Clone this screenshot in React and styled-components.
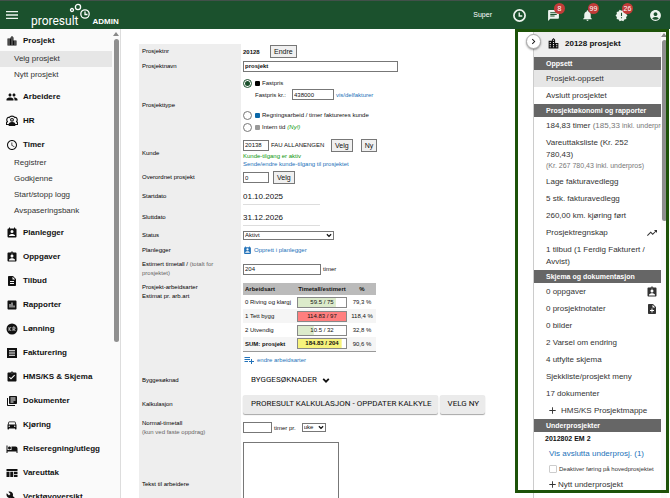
import React from "react"
import styled, { createGlobalStyle, css } from "styled-components"
import {
  MdAccountCircle,
  MdAdd,
  MdAssessment,
  MdAssignmentInd,
  MdAssignmentTurnedIn,
  MdBuild,
  MdChat,
  MdChevronRight,
  MdDescription,
  MdDirectionsCar,
  MdHotel,
  MdLibraryBooks,
  MdLocationCity,
  MdMenu,
  MdNewReleases,
  MdNotifications,
  MdNoteAdd,
  MdPeople,
  MdPlaylistAdd,
  MdAccessTime,
  MdTrendingUp,
} from "react-icons/md"

const PlannerIcon = () => (
  <svg viewBox="0 0 24 24" fill="currentColor" aria-hidden="true">
    <path d="M19 3h-1V1h-2v2H8V1H6v2H5a2 2 0 0 0-2 2v14a2 2 0 0 0 2 2h14a2 2 0 0 0 2-2V5a2 2 0 0 0-2-2zm-7 3a3 3 0 1 1 0 6 3 3 0 0 1 0-6zm6 12H6v-1c0-2 4-3.1 6-3.1s6 1.1 6 3.1v1z" />
  </svg>
)

const HrIcon = () => (
  <svg
    viewBox="1 1 26 23"
    fill="none"
    stroke="currentColor"
    strokeWidth="2.4"
    aria-hidden="true"
  >
    <path d="M9 20H2v-3c0-2 2-3 3-3-2-1-3-3-2-6s3-4 5-3c1-2 4-3 6-3s5 1 6 3c2-1 4 0 5 3s0 5-2 6c1 0 3 1 3 3v3h-7" />
    <circle cx="14" cy="10" r="3" />
    <path d="M8 22v-2c0-3 3-4 6-4s6 1 6 4v2z" fill="currentColor" />
  </svg>
)

const WageIcon = () => (
  <svg viewBox="0 0 24 24" aria-hidden="true">
    <circle cx="12" cy="12" r="11" fill="currentColor" />
    <g fill="none" stroke="#ddd" strokeWidth="1.6">
      <path d="M6 8v8M10.500 8L6.500 12l4 4" />
      <path d="M14 16V8h2a2.200 2.200 0 0 1 0 4.400h-2M16 12.400l2.500 3.600" />
    </g>
  </svg>
)

const InvoiceIcon = () => (
  <svg viewBox="0 0 24 24" aria-hidden="true">
    <path d="M2 2h20v20H2z" fill="currentColor" />
    <path d="M6 7.500h12M6 12h12M6 16.500h12" stroke="#fff" strokeWidth="2" />
  </svg>
)

const GoodsIcon = () => (
  <svg viewBox="0 0 24 24" fill="currentColor" aria-hidden="true">
    <path d="M1 4h22v4H1zM1 9.500h6V20H1zM8.500 9.500h6V20h-6zM16 9.500h7v4.500h-7zM16 15.500h7V20h-7z" />
  </svg>
)

const ClockIcon = () => (
  <svg
    viewBox="0 0 26 26"
    fill="none"
    stroke="currentColor"
    strokeWidth="3.4"
    aria-hidden="true"
  >
    <circle cx="13" cy="13" r="11.200" />
    <path d="M12.500 7v7h6" strokeWidth="2.8" />
  </svg>
)

const ChevronDown = () => (
  <svg
    viewBox="0 0 10 8"
    fill="none"
    stroke="currentColor"
    strokeWidth="2.2"
    aria-hidden="true"
  >
    <path d="M1.500 2L5 5.500L8.500 2" />
  </svg>
)

const menu = [
  {
    title: "Prosjekt",
    icon: MdLocationCity,
    items: ["Velg prosjekt", "Nytt prosjekt"],
  },
  { title: "Arbeidere", icon: MdPeople },
  { title: "HR", icon: HrIcon },
  {
    title: "Timer",
    icon: MdAccessTime,
    items: ["Registrer", "Godkjenne", "Start/stopp logg", "Avspaseringsbank"],
  },
  { title: "Planlegger", icon: PlannerIcon },
  { title: "Oppgaver", icon: MdAssignmentInd },
  { title: "Tilbud", icon: MdDescription },
  { title: "Rapporter", icon: MdAssessment },
  { title: "Lønning", icon: WageIcon },
  { title: "Fakturering", icon: InvoiceIcon },
  { title: "HMS/KS & Skjema", icon: MdAssignmentTurnedIn },
  { title: "Dokumenter", icon: MdLibraryBooks },
  { title: "Kjøring", icon: MdDirectionsCar },
  { title: "Reiseregning/utlegg", icon: MdHotel },
  { title: "Vareuttak", icon: GoodsIcon },
  { title: "Verktøyoversikt", icon: MdBuild },
]

const workTypes = [
  { name: "0 Riving og klargj", hours: "59.5 / 75", pct: "79,3 %", fill: 79 },
  { name: "1 Tett bygg", hours: "114.83 / 97", pct: "118,4 %", fill: 118 },
  { name: "2 Utvendig", hours: "10.5 / 32", pct: "32,8 %", fill: 33 },
  {
    name: "SUM: prosjekt",
    hours: "184.83 / 204",
    pct: "90,6 %",
    fill: 91,
    sum: true,
  },
]

const barColor = ({ fill, sum }) => {
  if (fill > 100) return "#ff7f7f"
  return sum ? "#f7f37c" : "#dcebcb"
}

function Header() {
  return (
    <TopBar>
      <IconButton aria-label="Meny" $size={16}>
        <MdMenu />
      </IconButton>
      <Logo href="#">
        <LogoText>proresult</LogoText>
        <LogoMark viewBox="0 0 22 22" aria-hidden="true">
          <circle cx="3" cy="9" r="1.500" />
          <circle cx="9" cy="6" r="2.600" />
          <circle cx="16" cy="13" r="4.200" />
          <path d="M16 10.500V13.500H18.500" />
        </LogoMark>
        <LogoSuffix>ADMIN</LogoSuffix>
      </Logo>
      <Tools>
        <span>Super</span>
        <IconButton aria-label="Timer" $size={13}>
          <ClockIcon />
        </IconButton>
        <IconButton aria-label="Meldinger" $size={13}>
          <MdChat />
          <Badge>8</Badge>
        </IconButton>
        <IconButton aria-label="Varsler" $size={13}>
          <MdNotifications />
          <Badge>99</Badge>
        </IconButton>
        <IconButton aria-label="Nyheter" $size={13}>
          <MdNewReleases />
          <Badge>26</Badge>
        </IconButton>
        <IconButton aria-label="Konto" $size={13}>
          <MdAccountCircle />
        </IconButton>
      </Tools>
    </TopBar>
  )
}

function Sidebar() {
  return (
    <SideNav>
      <Menu>
        {menu.map(({ title, icon: Icon, items }) => (
          <MenuGroup key={title}>
            <MenuHeading href="#">
              <Icon />
              {title}
            </MenuHeading>
            {items &&
              items.map(item => (
                <MenuLink
                  href="#"
                  key={item}
                  $active={item === "Velg prosjekt"}
                >
                  {item}
                </MenuLink>
              ))}
          </MenuGroup>
        ))}
      </Menu>
      <ScrollTrack $width={8}>
        <ScrollArrow />
        <ScrollThumb $length="65%" />
      </ScrollTrack>
    </SideNav>
  )
}

function WorkTypeTable() {
  return (
    <Table>
      <thead>
        <tr>
          <th>Arbeidsart</th>
          <th>Timetall/estimert</th>
          <th>%</th>
        </tr>
      </thead>
      <tbody>
        {workTypes.map(row => (
          <WorkRow key={row.name} $sum={row.sum}>
            <td>{row.name}</td>
            <td>
              <Bar
                style={{
                  backgroundImage: `linear-gradient(${barColor(
                    row
                  )}, ${barColor(row)})`,
                  backgroundSize: `${Math.min(row.fill, 100)}% 100%`,
                }}
              >
                {row.hours}
              </Bar>
            </td>
            <td>{row.pct}</td>
          </WorkRow>
        ))}
      </tbody>
    </Table>
  )
}

function ProjectForm() {
  return (
    <Form onSubmit={e => e.preventDefault()}>
      <Row $height={15}>
        <Label as="span">Prosjektnr</Label>
        <Value>
          <Line>
            <ProjectNumber>20128</ProjectNumber>
            <Button type="button">Endre</Button>
          </Line>
        </Value>
      </Row>
      <Row $height={14}>
        <Label htmlFor="name">Prosjektnavn</Label>
        <Value>
          <TextBox id="name" defaultValue="prosjekt" $width={155} $bold />
        </Value>
      </Row>
      <Row $height={64}>
        <Label as="span">Prosjekttype</Label>
        <Value>
          <Option>
            <Radio type="radio" name="type" defaultChecked />
            <Swatch $color="#000" />
            Fastpris
          </Option>
          <FixedPrice>
            <label htmlFor="price">Fastpris kr.:</label>
            <TextBox id="price" defaultValue="438000" $width={42} />
            <TextLink href="#">vis/delfakturer</TextLink>
          </FixedPrice>
          <Option>
            <Radio type="radio" name="type" />
            <Swatch $color="#0b68a8" />
            Regningsarbeid / timer faktureres kunde
          </Option>
          <Option>
            <Radio type="radio" name="type" />
            <Swatch $color="#999" />
            Intern tid <New>(Ny!)</New>
          </Option>
        </Value>
      </Row>
      <Row $height={32}>
        <Label htmlFor="customer">Kunde</Label>
        <Value>
          <Line>
            <TextBox id="customer" defaultValue="20138" $width={26} />
            <CustomerName>FAU ALLANENGEN</CustomerName>
            <Button type="button">Velg</Button>
            <SpacedButton type="button">Ny</SpacedButton>
          </Line>
          <Active>Kunde-tilgang er aktiv</Active>
          <TextLink href="#">Sende/endre kunde-tilgang til prosjektet</TextLink>
        </Value>
      </Row>
      <Row $height={17}>
        <Label htmlFor="parent">Overordnet prosjekt</Label>
        <Value>
          <Line>
            <TextBox id="parent" defaultValue="0" $width={26} />
            <Button type="button">Velg</Button>
          </Line>
        </Value>
      </Row>
      <Row $height={21}>
        <Label htmlFor="start">Startdato</Label>
        <Value>
          <DateBox id="start" defaultValue="01.10.2025" />
        </Value>
      </Row>
      <Row $height={21}>
        <Label htmlFor="end">Sluttdato</Label>
        <Value>
          <DateBox id="end" defaultValue="31.12.2026" />
        </Value>
      </Row>
      <Row $height={15}>
        <Label htmlFor="status">Status</Label>
        <Value>
          <SelectWrap $width={91}>
            <select id="status">
              <option>Aktivt</option>
            </select>
            <ChevronDown />
          </SelectWrap>
        </Value>
      </Row>
      <Row $height={14}>
        <Label as="span">Planlegger</Label>
        <Value>
          <IconLink href="#" $size={9}>
            <PlannerIcon />
            Opprett i planlegger
          </IconLink>
        </Value>
      </Row>
      <Row $height={24}>
        <Label htmlFor="estimate">
          Estimert timetall / <Muted>(totalt for prosjektet)</Muted>
        </Label>
        <Value>
          <Unit>
            <TextBox id="estimate" defaultValue="204" $width={78} />
            timer
          </Unit>
        </Value>
      </Row>
      <Row $height={87} $top>
        <Label as="span">
          Prosjekt-arbeidsarter
          <br />
          Estimat pr. arb.art
        </Label>
        <Value>
          <WorkTypeTable />
          <IconLink href="#" $size={12}>
            <MdPlaylistAdd />
            endre arbeidsarter
          </IconLink>
        </Value>
      </Row>
      <Row $height={24}>
        <Label as="span">Byggesøknad</Label>
        <Value>
          <FlatButton type="button">
            BYGGESØKNADER
            <ChevronDown />
          </FlatButton>
        </Value>
      </Row>
      <Row $height={24}>
        <Label as="span">Kalkulasjon</Label>
        <Value>
          <ButtonPair>
            <RaisedButton type="button">
              PRORESULT KALKULASJON - OPPDATER KALKYLE
            </RaisedButton>
            <RaisedButton type="button">VELG NY</RaisedButton>
          </ButtonPair>
        </Value>
      </Row>
      <Row $height={23}>
        <Label htmlFor="normal">
          Normal-timetall
          <br />
          <Muted>(kun ved faste oppdrag)</Muted>
        </Label>
        <Value>
          <Unit>
            <TextBox id="normal" $width={29} />
            timer pr.
            <SelectWrap $width={24}>
              <select aria-label="Periode">
                <option>uke</option>
              </select>
              <ChevronDown />
            </SelectWrap>
          </Unit>
        </Value>
      </Row>
      <Row $height={91}>
        <Label htmlFor="text">Tekst til arbeidere</Label>
        <Value>
          <TextArea id="text" />
        </Value>
      </Row>
    </Form>
  )
}

function ProjectPanel() {
  return (
    <Panel>
      <Toggle aria-label="Skjul panel">
        <MdChevronRight />
      </Toggle>
      <PanelBody>
        <PanelTitle>
          <MdLocationCity />
          20128 prosjekt
        </PanelTitle>
        <PanelHeading>Oppsett</PanelHeading>
        <PanelLink href="#" $active>
          Prosjekt-oppsett
        </PanelLink>
        <PanelLink href="#">Avslutt prosjektet</PanelLink>
        <PanelHeading>Prosjektøkonomi og rapporter</PanelHeading>
        <PanelLink href="#" $clip>
          184,83 timer <Grey>(185,33 </Grey>
          <Small>inkl. underpros)</Small>
        </PanelLink>
        <PanelLink href="#">
          Vareuttaksliste (Kr. 252 780,43)
          <SmallLine>(Kr. 267 780,43 inkl. underpros)</SmallLine>
        </PanelLink>
        <PanelLink href="#">Lage fakturavedlegg</PanelLink>
        <PanelLink href="#">5 stk. fakturavedlegg</PanelLink>
        <PanelLink href="#">260,00 km. kjøring ført</PanelLink>
        <PanelLink href="#" $split>
          Prosjektregnskap <MdTrendingUp />
        </PanelLink>
        <PanelLink href="#">1 tilbud (1 Ferdig Fakturert / Avvist)</PanelLink>
        <PanelHeading>Skjema og dokumentasjon</PanelHeading>
        <PanelLink href="#" $split>
          0 oppgaver <MdAssignmentInd />
        </PanelLink>
        <PanelLink href="#" $split>
          0 prosjektnotater <MdNoteAdd />
        </PanelLink>
        <PanelLink href="#">0 bilder</PanelLink>
        <PanelLink href="#">2 Varsel om endring</PanelLink>
        <PanelLink href="#">4 utfylte skjema</PanelLink>
        <PanelLink href="#">Sjekkliste/prosjekt meny</PanelLink>
        <PanelLink href="#">17 dokumenter</PanelLink>
        <AddLink href="#" $gap={3}>
          <MdAdd />
          HMS/KS Prosjektmappe
        </AddLink>
        <PanelHeading>Underprosjekter</PanelHeading>
        <SubProject href="#">2012802 EM 2</SubProject>
        <ClosedLink href="#">Vis avslutta underprosj. (1)</ClosedLink>
        <CheckLabel>
          <input type="checkbox" />
          Deaktiver føring på hovedprosjektet
        </CheckLabel>
        <AddLink href="#" $gap={0}>
          <MdAdd />
          Nytt underprosjekt
        </AddLink>
      </PanelBody>
      <ScrollTrack $width={6}>
        <ScrollArrow />
        <ScrollThumb $length="39%" />
      </ScrollTrack>
      <Frame />
    </Panel>
  )
}

function App() {
  return (
    <Page>
      <GlobalStyle />
      <Header />
      <Body>
        <Sidebar />
        <Main>
          <ProjectForm />
        </Main>
        <ProjectPanel />
      </Body>
    </Page>
  )
}

const GlobalStyle = createGlobalStyle`
  * {
    box-sizing: border-box;
  }

  body {
    margin: 0;
    color: #111;
    font-family: "Liberation Sans", Arial, sans-serif;
    font-size: 6px;
    line-height: 8px;
  }

  button, input, select, textarea {
    margin: 0;
    color: inherit;
    font: inherit;
  }

  a {
    color: inherit;
    text-decoration: none;
  }

  svg {
    flex: none;
  }
`

const Page = styled.div`
  display: flex;
  flex-direction: column;
  height: 100vh;
  overflow: hidden;
  background: #fff;
`

const TopBar = styled.header`
  display: flex;
  flex: none;
  align-items: center;
  height: 29px;
  padding: 0 8px 0 4px;
  border-top: 1px solid #42504a;
  background: #1b512d;
  color: #fff;
`

const IconButton = styled.button`
  position: relative;
  display: flex;
  padding: 0;
  border: 0;
  background: none;
  color: #edf3ee;
  cursor: pointer;

  > svg {
    width: ${({ $size }) => $size}px;
    height: ${({ $size }) => $size}px;
  }
`

const Badge = styled.span`
  position: absolute;
  top: -6px;
  right: -5px;
  width: 11px;
  height: 11px;
  border-radius: 50%;
  background: #c23b38;
  color: #fff;
  font-size: 7px;
  line-height: 11px;
  text-align: center;
`

const Logo = styled.a`
  display: flex;
  align-items: flex-end;
  margin-left: 11px;
`

const LogoText = styled.span`
  font-family: Roboto, sans-serif;
  font-size: 12px;
  line-height: 16px;
`

const LogoMark = styled.svg`
  width: 22px;
  height: 22px;
  margin-left: -10px;
  margin-bottom: 6px;
  fill: none;
  stroke: #fff;
  stroke-width: 1.3;
`

const LogoSuffix = styled.span`
  margin-left: 2px;
  font-size: 8px;
  font-weight: bold;
  line-height: 15px;
`

const Tools = styled.div`
  display: flex;
  align-items: center;
  gap: 21px;
  margin-left: auto;
  font-size: 7px;
`

const Body = styled.div`
  display: flex;
  flex: 1;
  min-height: 0;
`

const SideNav = styled.nav`
  display: flex;
  flex: none;
  width: 121px;
  border-right: 1px solid #ddd;
  background: #fafafa;
`

const Menu = styled.div`
  flex: 1;
  padding-top: 2px;
  overflow: hidden;
`

const MenuGroup = styled.div`
  margin-bottom: 4px;
`

const MenuHeading = styled.a`
  display: flex;
  align-items: center;
  gap: 5px;
  height: 20px;
  padding-left: 6px;
  font-size: 8px;
  font-weight: bold;

  svg {
    width: 12px;
    height: 12px;
  }
`

const MenuLink = styled.a`
  display: block;
  padding-left: 14px;
  background: ${({ $active }) => ($active ? "#e6e6e6" : "transparent")};
  color: #333;
  font-size: 8px;
  line-height: 16px;
`

const ScrollTrack = styled.div`
  display: flex;
  flex: none;
  flex-direction: column;
  align-items: center;
  gap: 3px;
  width: ${({ $width }) => $width}px;
  padding-top: 3px;
  background: #fafafa;
`

const ScrollArrow = styled.span`
  border: 3px solid transparent;
  border-top: 0;
  border-bottom: 4px solid #888;
`

const ScrollThumb = styled.span`
  width: 5px;
  height: ${({ $length }) => $length};
  border-radius: 3px;
  background: #8f8f8f;
`

const Main = styled.main`
  flex: 1;
  min-width: 0;
  padding: 15px 18px 0;
  overflow: hidden;
`

const Form = styled.form`
  display: flex;
  flex-direction: column;
`

const Row = styled.div`
  display: grid;
  grid-template-columns: 102px 1fr;
  align-items: ${({ $top }) => ($top ? "start" : "center")};
  min-height: ${({ $height }) => $height}px;
  background: linear-gradient(90deg, #eee 102px, transparent 102px);
  ${({ $top }) => $top && "padding-top: 2px;"}
`

const Label = styled.label`
  padding: 0 16px 0 3px;
  color: #000;
  line-height: 9px;
`

const Muted = styled.span`
  color: #666;
`

const Value = styled.div`
  min-width: 0;
  padding-left: 2px;
`

const Line = styled.div`
  display: flex;
  align-items: center;
  gap: 4px;
`

const Unit = styled(Line)`
  gap: 2px;
`

const ProjectNumber = styled.strong`
  width: 23px;
`

const Button = styled.button`
  height: 13px;
  padding: 0 3px;
  border: 1px solid #777;
  background: #f0f0f0;
  font-size: 7px;
  line-height: 11px;
`

const SpacedButton = styled(Button)`
  margin-left: 4px;
`

const TextBox = styled.input`
  width: ${({ $width }) => $width}px;
  height: 11px;
  padding: 0 1px;
  border: 1px solid #777;
  background: #fff;
  font-weight: ${({ $bold }) => ($bold ? "bold" : "normal")};
`

const DateBox = styled.input`
  width: 77px;
  height: 17px;
  padding: 0;
  border: 0;
  border-bottom: 1px solid #ddd;
  font-size: 8px;
`

const TextArea = styled.textarea`
  display: block;
  width: 96px;
  height: 85px;
  border: 1px solid #777;
  resize: none;
`

const SelectWrap = styled.span`
  display: grid;
  align-items: center;
  width: ${({ $width }) => $width}px;
  height: 9px;

  > * {
    grid-area: 1 / 1;
  }

  select {
    width: 100%;
    height: 9px;
    padding: 0 1px;
    border: 1px solid #777;
    border-radius: 0;
    background: #fff;
    line-height: 7px;
    appearance: none;
  }

  svg {
    justify-self: end;
    width: 6px;
    height: 5px;
    margin-right: 2px;
    pointer-events: none;
  }

  ${Unit} & {
    margin-left: 4px;
  }
`

const Option = styled.label`
  display: flex;
  align-items: center;
  gap: 2px;
  height: 12px;
`

const Radio = styled.input`
  display: grid;
  place-items: center;
  width: 9px;
  height: 9px;
  border: 1px solid #777;
  border-radius: 50%;
  appearance: none;

  &:checked {
    border-color: #1b512d;
  }

  &:checked::before {
    content: "";
    width: 5px;
    height: 5px;
    border-radius: 50%;
    background: #1b512d;
  }
`

const Swatch = styled.span`
  width: 5px;
  height: 5px;
  margin-left: 1px;
  border-radius: 1px;
  background: ${({ $color }) => $color};
`

const New = styled.em`
  color: #0a970a;
`

const FixedPrice = styled.div`
  display: flex;
  align-items: center;
  gap: 2px;
  margin-bottom: 9px;
  padding-left: 12px;

  label {
    width: 35px;
  }
`

const CustomerName = styled.span`
  width: 56px;
  margin-left: -2px;
  white-space: nowrap;
`

const Active = styled.div`
  color: #0a970a;
`

const linkColor = css`
  color: #2272b9;
`

const TextLink = styled.a`
  display: block;
  ${linkColor}
`

const IconLink = styled.a`
  display: flex;
  align-items: center;
  gap: 2px;
  ${linkColor}

  svg {
    width: ${({ $size }) => $size}px;
    height: ${({ $size }) => $size}px;
  }
`

const Table = styled.table`
  width: 133px;
  margin-bottom: 2px;
  border-bottom: 1px solid #999;
  border-collapse: collapse;
  table-layout: fixed;

  th {
    height: 12px;
    padding: 0 2px;
    background: #bbb;
    text-align: center;
    white-space: nowrap;
  }

  th:nth-child(1) {
    width: 53px;
    text-align: left;
  }

  th:nth-child(2) {
    width: 52px;
    padding: 0;
  }

  td {
    padding: 0 1px;
    overflow: hidden;
    text-align: center;
    white-space: nowrap;
  }

  td:first-child {
    padding-left: 2px;
    text-align: left;
  }
`

const WorkRow = styled.tr`
  height: 14px;
  font-weight: ${({ $sum }) => ($sum ? "bold" : "normal")};

  &:nth-child(even) {
    background: #f5f5f5;
  }

  td:last-child {
    font-weight: normal;
  }
`

const Bar = styled.div`
  height: 11px;
  border: 1px solid #888;
  background-color: #fff;
  background-repeat: no-repeat;
  line-height: 9px;
`

const FlatButton = styled.button`
  display: flex;
  align-items: center;
  gap: 5px;
  height: 19px;
  padding: 0 6px 0 8px;
  border: 0;
  background: none;
  font-family: Roboto, sans-serif;
  font-size: 8px;
  white-space: nowrap;

  svg {
    width: 8px;
    height: 7px;
  }
`

const RaisedButton = styled(FlatButton)`
  border-radius: 2px;
  background: #ebebeb;
  box-shadow: 0 1px 1px rgba(0, 0, 0, 0.35);
`

const ButtonPair = styled(Line)`
  gap: 2px;
`

const Panel = styled.aside`
  position: relative;
  display: flex;
  flex: none;
  width: 155px;
  padding: 1px 3px 0 18px;
`

const Frame = styled.div`
  position: absolute;
  inset: 0 1px 5px 0;
  border: 3px solid #1d5209;
  pointer-events: none;
`

const Toggle = styled.button`
  position: absolute;
  top: 5px;
  left: 11px;
  display: grid;
  place-items: center;
  width: 15px;
  height: 15px;
  padding: 0;
  border: 1px solid #aaa;
  border-radius: 50%;
  background: #fff;
  box-shadow: 0 1px 2px rgba(0, 0, 0, 0.4);

  svg {
    width: 11px;
    height: 11px;
  }
`

const PanelBody = styled.div`
  flex: 1;
  min-width: 0;
  border-left: 1px solid #ccc;
  color: #333;
  font-size: 8px;
  line-height: 12px;
`

const PanelTitle = styled.h2`
  display: flex;
  align-items: center;
  gap: 5px;
  height: 27px;
  margin: 0;
  padding-left: 13px;
  background: #eee;
  color: #111;
  font-size: 8px;

  svg {
    width: 13px;
    height: 13px;
  }
`

const PanelHeading = styled.h3`
  margin: 0;
  padding-left: 12px;
  background: #666;
  color: #fff;
  font-size: 7px;
  line-height: 13px;
`

const PanelLink = styled.a`
  display: ${({ $split }) => ($split ? "flex" : "block")};
  align-items: center;
  justify-content: space-between;
  padding: 3px ${({ $split, $clip }) => ($clip ? 0 : $split ? 3 : 8)}px 2px 12px;
  overflow: hidden;
  background: ${({ $active }) => ($active ? "#e6e6e6" : "transparent")};
  white-space: ${({ $clip }) => ($clip ? "nowrap" : "normal")};

  svg {
    width: 12px;
    height: 12px;
  }
`

const Grey = styled.span`
  color: #777;
`

const Small = styled(Grey)`
  font-size: 7px;
`

const SmallLine = styled(Small)`
  display: block;
  line-height: 10px;
  white-space: nowrap;
`

const AddLink = styled.a`
  display: flex;
  align-items: center;
  gap: ${({ $gap }) => $gap}px;
  height: 17px;
  padding-left: 13px;

  svg {
    width: 11px;
    height: 11px;
  }
`

const SubProject = styled.a`
  display: block;
  padding: 1px 0 1px 11px;
  color: #111;
  font-size: 7px;
  font-weight: bold;
`

const ClosedLink = styled.a`
  display: block;
  padding: 2px 0 2px 15px;
  ${linkColor}
`

const CheckLabel = styled.label`
  display: flex;
  align-items: center;
  gap: 2px;
  height: 14px;
  padding-left: 15px;
  font-size: 6px;
  white-space: nowrap;

  input {
    width: 8px;
    height: 8px;
    border: 1px solid #ccc;
    border-radius: 1px;
    appearance: none;
  }
`

export default App
